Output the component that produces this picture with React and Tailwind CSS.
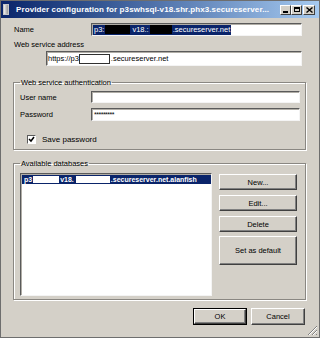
import React from "react";

const font = { fontFamily: '"Liberation Sans", Arial, sans-serif' };

function Sunken({ className = "", children }) {
  return (
    <div
      className={`bg-white border-t border-l border-t-[#5a5a5a] border-l-[#5a5a5a] border-b border-r border-b-[#f4f4f4] border-r-[#f4f4f4] shadow-[inset_1px_1px_0_#b0ada6] flex items-center overflow-hidden ${className}`}
    >
      {children}
    </div>
  );
}

function Btn({ className = "", children, def }) {
  return (
    <div
      className={`flex items-center justify-center bg-[#d4d0c8] ${
        def ? "border border-black" : ""
      } ${className}`}
    >
      <div className="w-full h-full flex items-center justify-center border-t border-l border-t-white border-l-white border-b border-r border-b-[#404040] border-r-[#404040] shadow-[inset_-1px_-1px_0_#808080]">
        {children}
      </div>
    </div>
  );
}

function TitleBtn({ children, className = "" }) {
  return (
    <div
      className={`w-[11px] h-[10px] bg-[#d4d0c8] border-t border-l border-t-white border-l-white border-b border-r border-b-[#404040] border-r-[#404040] flex items-center justify-center ${className}`}
    >
      {children}
    </div>
  );
}

export default function App() {
  return (
    <div
      className="w-[320px] h-[338px] bg-[#d4d0c8] border border-[#6e6e6e] flex flex-col text-[7.5px] leading-[9px] text-black overflow-hidden"
      style={font}
    >
      {/* Title bar */}
      <div className="h-[17px] flex items-center bg-gradient-to-r from-[#0a246a] to-[#a6caf0] shrink-0">
        <div className="ml-[2px] w-[6px] h-[11px] bg-gradient-to-r from-[#f0f0f0] to-[#9a9a9a] border border-[#c8c8c8]" />
        <div className="ml-[7px] text-white font-bold text-[8px] whitespace-nowrap leading-[10px] tracking-[0.1px]">
          Provider configuration for p3swhsql-v18.shr.phx3.secureserver...
        </div>
        <div className="flex-1" />
        <div className="flex items-center">
          <TitleBtn>
            <div className="w-[5px] h-[2px] bg-black mt-[4px]" />
          </TitleBtn>
          <TitleBtn>
            <div className="w-[6px] h-[5px] border border-black border-t-2" />
          </TitleBtn>
          <TitleBtn className="ml-[1px] w-[12px]">
            <svg width="7" height="6" viewBox="0 0 7 6">
              <path d="M0.5 0.5 L6.5 5.5 M6.5 0.5 L0.5 5.5" stroke="black" strokeWidth="1.4" />
            </svg>
          </TitleBtn>
        </div>
        <div className="w-[4px]" />
      </div>

      {/* Name */}
      <div className="flex items-center mt-[5px] pl-[13px]">
        <div className="w-[77px]">Name</div>
        <Sunken className="w-[211px] h-[13px] pl-[1px]">
          <div className="bg-[#0a246a] text-white h-[10px] flex items-center whitespace-nowrap">
            <span className="ml-[1px]">p3:</span>
            <span className="inline-block w-[25px] h-[9px] bg-black ml-[1px]" />
            <span className="ml-[2px]">v18.:</span>
            <span className="inline-block w-[22px] h-[9px] bg-black ml-[1px]" />
            <span className="ml-[1px] mr-[1px]">.secureserver.net</span>
          </div>
        </Sunken>
      </div>

      {/* Web service address */}
      <div className="mt-[4px] pl-[13px] h-[9px]">Web service address</div>
      <div className="mt-[2px] pl-[45px]">
        <Sunken className="w-[256px] h-[15px] pl-[1px] whitespace-nowrap">
          <span>https://p3</span>
          <span className="inline-block w-[31px] h-[10px] bg-white border border-[#303030]" />
          <span className="ml-[1px]">.secureserver.net</span>
        </Sunken>
      </div>

      {/* Web service authentication */}
      <fieldset className="mt-[12px] ml-[12px] w-[293px] border border-[#8a8782] shadow-[inset_1px_1px_0_#fff,1px_1px_0_#fff] pb-[5px]">
        <legend className="ml-[6px] px-[1px] leading-[9px]">Web service authentication</legend>
        <div className="flex items-center mt-[4px] pl-[6px]">
          <div className="w-[71px]">User name</div>
          <Sunken className="w-[209px] h-[12px]" />
        </div>
        <div className="flex items-center mt-[5px] pl-[6px]">
          <div className="w-[71px]">Password</div>
          <Sunken className="w-[209px] h-[13px] pl-[2px] text-[7px]">
            <span className="tracking-[-0.5px] -mt-[1px]">*********</span>
          </Sunken>
        </div>
        <div className="flex items-center mt-[14px] pl-[13px]">
          <div className="w-[9px] h-[9px] bg-white border-t border-l border-t-[#5a5a5a] border-l-[#5a5a5a] border-b border-r border-b-white border-r-white flex items-center justify-center">
            <svg width="7" height="7" viewBox="0 0 7 7">
              <path d="M1 3 L3 5 L6 1" stroke="black" strokeWidth="1.5" fill="none" />
            </svg>
          </div>
          <div className="ml-[6px] text-[8px]">Save password</div>
        </div>
      </fieldset>

      {/* Available databases */}
      <fieldset className="mt-[9px] ml-[12px] w-[293px] border border-[#8a8782] shadow-[inset_1px_1px_0_#fff,1px_1px_0_#fff] pb-[3px]">
        <legend className="ml-[6px] px-[1px] leading-[9px]">Available databases</legend>
        <div className="flex mt-[5px] pl-[6px]">
          <div className="w-[192px] h-[123px] bg-white border-t border-l border-t-[#5a5a5a] border-l-[#5a5a5a] border-b border-r border-b-[#f4f4f4] border-r-[#f4f4f4] shadow-[inset_1px_1px_0_#b0ada6] pt-[1px] pl-[1px]">
            <div className="bg-[#0a246a] text-white h-[9px] w-[189px] flex items-center whitespace-nowrap font-bold text-[7px]">
              <span className="ml-[2px]">p3</span>
              <span className="inline-block w-[26px] h-[7px] bg-white ml-[1px]" />
              <span className="ml-[1px]">v18.</span>
              <span className="inline-block w-[34px] h-[7px] bg-white ml-[2px]" />
              <span className="ml-[1px]">.secureserver.net.alanfish</span>
            </div>
          </div>
          <div className="ml-[7px] flex flex-col w-[78px]">
            <Btn className="h-[16px] mt-[1px]">New...</Btn>
            <Btn className="h-[16px] mt-[5px]">Edit...</Btn>
            <Btn className="h-[16px] mt-[5px]">Delete</Btn>
            <Btn className="h-[29px] mt-[4px]">Set as default</Btn>
          </div>
        </div>
      </fieldset>

      {/* OK / Cancel */}
      <div className="flex justify-end mt-[8px] pr-[14px] gap-[4px]">
        <Btn def className="w-[54px] h-[17px]">OK</Btn>
        <Btn className="w-[54px] h-[17px]">Cancel</Btn>
      </div>

      <div className="flex-1" />
      <div className="flex justify-end pr-[1px] pb-[1px]">
        <svg width="11" height="11" viewBox="0 0 11 11">
          <path d="M10 1 L1 10 M10 5 L5 10 M10 9 L9 10" stroke="#808080" strokeWidth="1" />
          <path d="M10 2 L2 10 M10 6 L6 10" stroke="#ffffff" strokeWidth="1" />
        </svg>
      </div>
    </div>
  );
}
